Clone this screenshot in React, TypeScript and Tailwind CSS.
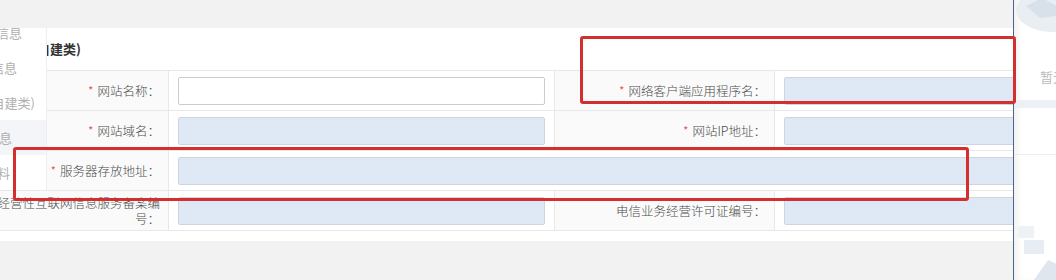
import React from 'react';

const font = { fontFamily: '"Noto Sans CJK SC", "Microsoft YaHei", sans-serif' };

type Row = { label: string; required?: boolean; readonly?: boolean; wide?: boolean; label2?: string; required2?: boolean };

const rows: Row[] = [
  { label: '网站名称：', required: true, label2: '网络客户端应用程序名：', required2: true },
  { label: '网站域名：', required: true, readonly: true, label2: '网站IP地址：', required2: true },
  { label: '服务器存放地址：', required: true, readonly: true, wide: true },
  { label: '经营性互联网信息服务备案编号：', readonly: true, label2: '电信业务经营许可证编号：' },
];

function Label({ text, required }: { text: string; required?: boolean }) {
  return (
    <div className="flex items-center justify-end border-r border-b border-[#e8e8e8] bg-[#fafafa] px-[8px] text-right text-[12.5px] font-light leading-[16px] text-[#4a4a4a]">
      <span>
        {required && <span className="mr-[4px] text-[#e4393c]">*</span>}
        {text}
      </span>
    </div>
  );
}

function Field({ readonly, wide }: { readonly?: boolean; wide?: boolean }) {
  return (
    <div className={`flex items-center border-r border-b border-[#e8e8e8] bg-white px-[9px] ${wide ? 'col-span-3' : ''}`}>
      <div
        className={
          readonly
            ? 'h-[28px] w-full rounded-[2px] border border-[#cdd6e0] bg-[#dfe9f5]'
            : 'h-[28px] w-full rounded-[2px] border border-[#cccccc] bg-white'
        }
      />
    </div>
  );
}

// left menu, scrolled so most of each entry is off screen
const sideItems = [
  { text: '主体信息', ml: 'ml-[-30px]' },
  { text: '网站信息', ml: 'ml-[-35px]' },
  { text: '网站(自建类)', ml: 'ml-[-39px]' },
  { text: '联系信息', ml: 'ml-[-40px]', active: true },
  { text: '上传资料', ml: 'ml-[-42px]' },
];

export default function App() {
  return (
    <div className="relative h-[280px] w-[1056px] overflow-hidden bg-[#f2f2f2]" style={font}>
      <div className="h-[28px]" />
      <div className="h-[213px] overflow-hidden bg-white">
        <div className="flex h-[42px] items-center">
          <span className="ml-[-20px] text-[13px] font-bold text-[#333]">网站信息(自建类)</span>
        </div>
        <div className="ml-[-12px] grid w-[1250px] auto-rows-[40px] grid-cols-[181px_386px_220px_463px] border-t border-[#e8e8e8]">
          {rows.map((r, i) => (
            <React.Fragment key={i}>
              <Label text={r.label} required={r.required} />
              <Field readonly={r.readonly} wide={r.wide} />
              {!r.wide && (
                <>
                  <Label text={r.label2 || ''} required={r.required2} />
                  <Field readonly />
                </>
              )}
            </React.Fragment>
          ))}
        </div>
      </div>

      {/* sidebar overlay */}
      <div className="absolute left-0 top-[28px] h-[162px] w-[47px] overflow-hidden border-r border-[#eeeeee] bg-white text-[13px] text-[#b0b0b0]">
        <div className="mt-[-13px] flex flex-col">
          {sideItems.map((s, i) => (
            <div
              key={i}
              className={`flex h-[35px] shrink-0 items-center whitespace-nowrap ${s.active ? 'bg-[#f3f5f8]' : ''}`}
            >
              <span className={s.ml}>{s.text}</span>
            </div>
          ))}
        </div>
      </div>

      {/* right side panel */}
      <div className="absolute left-[1013px] top-0 flex h-[280px] w-[43px] flex-col overflow-hidden border-l border-[#4b6686] bg-white shadow-[inset_6px_0_8px_-4px_rgba(0,0,0,0.08)]">
        <svg width="43" height="36" viewBox="0 0 43 36" className="shrink-0">
          <ellipse cx="38" cy="10" rx="36" ry="22" fill="#e9eef3" />
          <path d="M12 6 L28 -2 L43 6 L43 16 L26 18 Z" fill="#d8e0ea" />
        </svg>
        <div className="mt-[33px] whitespace-nowrap pl-[26px] text-[13px] leading-[16px] text-[#bbbbbb]">暂无数据</div>
        <div className="mt-[15px] h-[8px] shrink-0 bg-[#edf1f6]" />
        <div className="mt-[46px] h-px shrink-0 bg-[#ececec]" />
        <svg width="43" height="60" viewBox="0 0 43 60" className="mt-auto shrink-0">
          <rect x="4" y="6" width="16" height="12" fill="#eef1f5" />
          <rect x="10" y="20" width="20" height="14" fill="#e8edf3" />
          <path d="M20 60 L34 40 L43 44 L43 60 Z" fill="#dfe6ee" />
        </svg>
      </div>

      {/* red annotation boxes */}
      <div className="absolute left-[580px] top-[36px] h-[68px] w-[436px] rounded-[3px] border-[3px] border-[#d32f2f]" />
      <div className="absolute left-[13px] top-[147px] h-[54px] w-[956px] rounded-[3px] border-[3px] border-[#d32f2f]" />
    </div>
  );
}
